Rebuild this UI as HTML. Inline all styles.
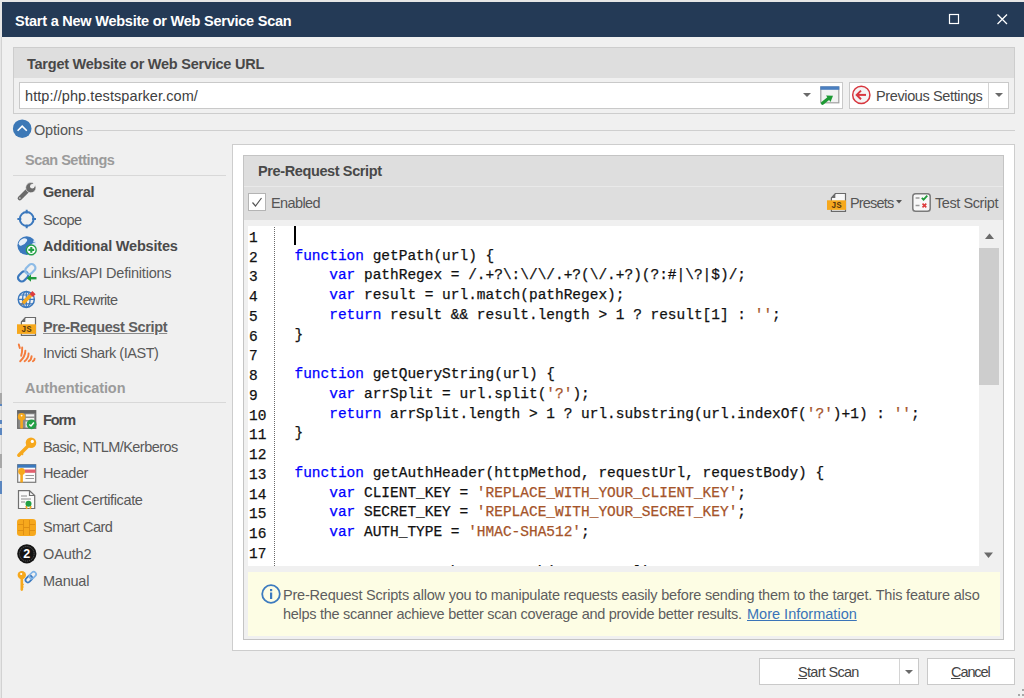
<!DOCTYPE html>
<html><head><meta charset="utf-8"><style>
html,body{margin:0;padding:0;}
body{width:1024px;height:698px;overflow:hidden;position:relative;background:#f0f0f0;font-family:"Liberation Sans",sans-serif;}
.a{position:absolute;}
.t{white-space:nowrap;line-height:normal;}
svg{overflow:visible;}
</style></head><body>
<div class="a" style="left:0px;top:0px;width:1024px;height:2px;background:#e6e6e6;"></div>
<div class="a" style="left:0px;top:0px;width:2px;height:698px;background:#e6e6e6;"></div>
<div class="a" style="left:1px;top:37px;width:1px;height:661px;background:#d2d2d2;"></div>
<div class="a" style="left:0px;top:393px;width:1.5px;height:12px;background:#a8a8a8;"></div>
<div class="a" style="left:0px;top:404px;width:1.5px;height:2px;background:#5a86c0;"></div>
<div class="a" style="left:0px;top:420px;width:1.5px;height:4px;background:#5a86c0;"></div>
<div class="a" style="left:0px;top:428px;width:1.5px;height:7px;background:#5a86c0;"></div>
<div class="a" style="left:0px;top:454px;width:1.5px;height:14px;background:#a8a8a8;"></div>
<div class="a" style="left:0px;top:481px;width:1.5px;height:13px;background:#5a86c0;"></div>
<div class="a" style="left:2px;top:2px;width:1022px;height:35px;background:#243a56;"></div>
<div class="a t  fit" style="left:15px;top:13px;font-size:14.5px;font-weight:bold;color:#ffffff;letter-spacing:-0.233px;font-family:'Liberation Sans', sans-serif;">Start a New Website or Web Service Scan</div>
<svg class="a" style="left:949px;top:14px;" width="11" height="11" viewBox="0 0 11 11"><rect x="0.5" y="0.5" width="9" height="9" fill="none" stroke="#fff" stroke-width="1.2"/></svg>
<svg class="a" style="left:997px;top:14px;" width="11" height="11" viewBox="0 0 11 11"><path d="M0.5 0.5 L10 10 M10 0.5 L0.5 10" stroke="#fff" stroke-width="1.3"/></svg>
<div class="a" style="left:13px;top:47px;width:1002px;height:67px;background:#f0f0f0;border:1px solid #cdcdcd;box-sizing:border-box;"></div>
<div class="a" style="left:14px;top:48px;width:1000px;height:30px;background:#dedede;"></div>
<div class="a t  fit" style="left:27px;top:56px;font-size:14.5px;font-weight:bold;color:#484848;letter-spacing:-0.239px;font-family:'Liberation Sans', sans-serif;">Target Website or Web Service URL</div>
<div class="a" style="left:19px;top:82px;width:824px;height:27px;background:#ffffff;border:1px solid #c9c9c9;box-sizing:border-box;"></div>
<div class="a t  fit" style="left:25px;top:88px;font-size:14.5px;font-weight:normal;color:#404040;letter-spacing:0.077px;font-family:'Liberation Sans', sans-serif;">http://php.testsparker.com/</div>
<svg class="a" style="left:803px;top:93px;" width="9" height="5" viewBox="0 0 9 5"><path d="M0 0 L8 0 L4 4 Z" fill="#6a6a6a"/></svg>
<svg class="a" style="left:820px;top:86px;" width="20" height="20" viewBox="0 0 20 20"><rect x="0.8" y="1" width="18" height="15.8" fill="#f2f2f2" stroke="#a0a0a0" stroke-width="1.2"/><rect x="0.3" y="0.3" width="19" height="3.5" fill="#4a7fc0"/><path d="M2.5 17.3 L9 12" stroke="#1e9a34" stroke-width="3.2" stroke-linecap="round"/><path d="M6 9.5 L13 9.8 L10.5 16 Z" fill="#1e9a34"/></svg>
<div class="a" style="left:849px;top:82px;width:160px;height:27px;background:#ffffff;border:1px solid #c9c9c9;box-sizing:border-box;"></div>
<div class="a" style="left:988px;top:83px;width:1px;height:25px;background:#d4d4d4;"></div>
<svg class="a" style="left:851px;top:85px;" width="21" height="21" viewBox="0 0 21 21"><circle cx="10.3" cy="9.9" r="8.6" fill="#f4f4f4" stroke="#d8373f" stroke-width="1.5"/><path d="M6 9.9 H15" stroke="#d8373f" stroke-width="2"/><path d="M10 5.6 L5.7 9.9 L10 14.2" fill="none" stroke="#d8373f" stroke-width="2"/></svg>
<div class="a t  fit" style="left:876px;top:88px;font-size:14.5px;font-weight:normal;color:#484848;letter-spacing:-0.376px;font-family:'Liberation Sans', sans-serif;">Previous Settings</div>
<svg class="a" style="left:995px;top:93px;" width="9" height="5" viewBox="0 0 9 5"><path d="M0 0 L8 0 L4 4 Z" fill="#6a6a6a"/></svg>
<div class="a" style="left:86px;top:130px;width:929px;height:1px;background:#cfcfcf;"></div>
<svg class="a" style="left:13px;top:120px;" width="19" height="19" viewBox="0 0 19 19"><circle cx="9.2" cy="8.7" r="9.3" fill="#3c78b6"/><path d="M4.6 10.7 L9.2 6.2 L13.8 10.7" fill="none" stroke="#fff" stroke-width="1.6"/></svg>
<div class="a t  fit" style="left:34px;top:122px;font-size:14.5px;font-weight:normal;color:#555555;letter-spacing:-0.167px;font-family:'Liberation Sans', sans-serif;">Options</div>
<div class="a t  fit" style="left:25px;top:152px;font-size:14.5px;font-weight:bold;color:#9b9b9b;letter-spacing:-0.5px;font-family:'Liberation Sans', sans-serif;">Scan Settings</div>
<div class="a" style="left:13px;top:175px;width:213px;height:1px;background:#d8d8d8;"></div>
<div class="a t  fit" style="left:43px;top:184px;font-size:14.5px;font-weight:bold;color:#4a4a4a;letter-spacing:-0.431px;font-family:'Liberation Sans', sans-serif;">General</div>
<div class="a t  fit" style="left:43px;top:212px;font-size:14.5px;font-weight:normal;color:#595959;letter-spacing:-0.5px;font-family:'Liberation Sans', sans-serif;">Scope</div>
<div class="a t  fit" style="left:43px;top:238px;font-size:14.5px;font-weight:bold;color:#4a4a4a;letter-spacing:-0.189px;font-family:'Liberation Sans', sans-serif;">Additional Websites</div>
<div class="a t  fit" style="left:43px;top:265px;font-size:14.5px;font-weight:normal;color:#595959;letter-spacing:-0.22px;font-family:'Liberation Sans', sans-serif;">Links/API Definitions</div>
<div class="a t  fit" style="left:43px;top:292px;font-size:14.5px;font-weight:normal;color:#595959;letter-spacing:-0.66px;font-family:'Liberation Sans', sans-serif;">URL Rewrite</div>
<div class="a t  fit" style="left:43px;top:319px;font-size:14.5px;font-weight:bold;color:#5e5e5e;letter-spacing:-0.353px;font-family:'Liberation Sans', sans-serif;text-decoration:underline;text-decoration-color:#8a8a8a;">Pre-Request Script</div>
<div class="a t  fit" style="left:43px;top:345px;font-size:14.5px;font-weight:normal;color:#595959;letter-spacing:-0.474px;font-family:'Liberation Sans', sans-serif;">Invicti Shark (IAST)</div>
<div class="a t  fit" style="left:25px;top:380px;font-size:14.5px;font-weight:bold;color:#9b9b9b;letter-spacing:-0.077px;font-family:'Liberation Sans', sans-serif;">Authentication</div>
<div class="a" style="left:13px;top:402px;width:213px;height:1px;background:#d8d8d8;"></div>
<div class="a t  fit" style="left:43px;top:412px;font-size:14.5px;font-weight:bold;color:#4a4a4a;letter-spacing:-1.07px;font-family:'Liberation Sans', sans-serif;">Form</div>
<div class="a t  fit" style="left:43px;top:439px;font-size:14.5px;font-weight:normal;color:#595959;letter-spacing:-0.563px;font-family:'Liberation Sans', sans-serif;">Basic, NTLM/Kerberos</div>
<div class="a t  fit" style="left:43px;top:465px;font-size:14.5px;font-weight:normal;color:#595959;letter-spacing:-0.44px;font-family:'Liberation Sans', sans-serif;">Header</div>
<div class="a t  fit" style="left:43px;top:492px;font-size:14.5px;font-weight:normal;color:#595959;letter-spacing:-0.383px;font-family:'Liberation Sans', sans-serif;">Client Certificate</div>
<div class="a t  fit" style="left:43px;top:519px;font-size:14.5px;font-weight:normal;color:#595959;letter-spacing:-0.47px;font-family:'Liberation Sans', sans-serif;">Smart Card</div>
<div class="a t  fit" style="left:43px;top:546px;font-size:14.5px;font-weight:normal;color:#595959;letter-spacing:-0.12px;font-family:'Liberation Sans', sans-serif;">OAuth2</div>
<div class="a t  fit" style="left:43px;top:573px;font-size:14.5px;font-weight:normal;color:#595959;letter-spacing:-0.24px;font-family:'Liberation Sans', sans-serif;">Manual</div>
<div class="a" style="left:232px;top:144px;width:783px;height:507px;background:#ffffff;border:1px solid #cdcdcd;box-sizing:border-box;"></div>
<div class="a" style="left:243px;top:155px;width:761px;height:485px;background:#f0f0f0;border:1px solid #c4c4c4;box-sizing:border-box;"></div>
<div class="a" style="left:244px;top:156px;width:759px;height:64px;background:#dedede;"></div>
<div class="a t  fit" style="left:258px;top:163px;font-size:14.5px;font-weight:bold;color:#484848;letter-spacing:-0.382px;font-family:'Liberation Sans', sans-serif;">Pre-Request Script</div>
<div class="a" style="left:244px;top:186px;width:759px;height:1px;background:#e9e9e9;"></div>
<div class="a" style="left:248px;top:193px;width:18px;height:18px;background:#ffffff;border:1px solid #b4b4b4;box-sizing:border-box;"></div>
<svg class="a" style="left:251px;top:196px;" width="12" height="12" viewBox="0 0 12 12"><path d="M1.5 6.5 L4.5 10 L10.5 2" fill="none" stroke="#555" stroke-width="1.2"/></svg>
<div class="a t  fit" style="left:271px;top:195px;font-size:14.5px;font-weight:normal;color:#555555;letter-spacing:-0.604px;font-family:'Liberation Sans', sans-serif;">Enabled</div>
<div class="a t  fit" style="left:850px;top:195px;font-size:14.5px;font-weight:normal;color:#555555;letter-spacing:-0.833px;font-family:'Liberation Sans', sans-serif;">Presets</div>
<svg class="a" style="left:896px;top:200px;" width="7" height="5" viewBox="0 0 7 5"><path d="M0 0 L6 0 L3 3.5 Z" fill="#555"/></svg>
<div class="a t  fit" style="left:935px;top:195px;font-size:14.5px;font-weight:normal;color:#555555;letter-spacing:-0.42px;font-family:'Liberation Sans', sans-serif;">Test Script</div>
<div class="a" style="left:248px;top:226px;width:731px;height:340px;background:#ffffff;"></div>
<div class="a" style="left:979px;top:226px;width:24px;height:340px;background:#f0f0f0;"></div>
<div class="a" style="left:979px;top:248px;width:20px;height:137px;background:#cdcdcd;"></div>
<svg class="a" style="left:985px;top:233px;" width="10" height="7" viewBox="0 0 10 7"><path d="M0 6 L9 6 L4.5 0.5 Z" fill="#6a6a6a"/></svg>
<svg class="a" style="left:984px;top:552px;" width="10" height="7" viewBox="0 0 10 7"><path d="M0 0.5 L9 0.5 L4.5 6 Z" fill="#6a6a6a"/></svg>
<div class="a" style="left:274px;top:227px;width:0;height:339px;border-left:1px dotted #6a6a6a"></div>
<div class="a" style="left:294px;top:226px;width:1.5px;height:19px;background:#000;"></div>
<div class="a" style="left:248px;top:572px;width:752px;height:64px;background:#fdfde4;"></div>
<svg class="a" style="left:261px;top:584px;" width="20" height="20" viewBox="0 0 20 20"><circle cx="10" cy="10" r="8.8" fill="none" stroke="#3d7bbf" stroke-width="1.8"/><rect x="9" y="8.5" width="2.2" height="6.5" fill="#3d7bbf"/><rect x="9" y="5" width="2.2" height="2.2" fill="#3d7bbf"/></svg>
<div class="a t  fit" style="left:283px;top:587px;font-size:14.5px;font-weight:normal;color:#5e5e5e;letter-spacing:-0.198px;font-family:'Liberation Sans', sans-serif;">Pre-Request Scripts allow you to manipulate requests easily before sending them to the target. This feature also</div>
<div class="a t  fit" style="left:283px;top:606px;font-size:14.5px;font-weight:normal;color:#5e5e5e;letter-spacing:-0.283px;font-family:'Liberation Sans', sans-serif;">helps the scanner achieve better scan coverage and provide better results.</div>
<div class="a t  fit" style="left:747px;top:606px;font-size:14.5px;font-weight:normal;color:#3a74b8;letter-spacing:0.011px;font-family:'Liberation Sans', sans-serif;text-decoration:underline;">More Information</div>
<div class="a" style="left:1022px;top:689px;width:2px;height:2px;background:#a8a8a8;"></div>
<div class="a" style="left:1018px;top:694px;width:2px;height:2px;background:#a8a8a8;"></div>
<div class="a" style="left:1022px;top:694px;width:2px;height:2px;background:#a8a8a8;"></div>
<div class="a" style="left:759px;top:658px;width:160px;height:27px;background:#ffffff;border:1px solid #c9c9c9;box-sizing:border-box;"></div>
<div class="a" style="left:899px;top:659px;width:1px;height:25px;background:#d4d4d4;"></div>
<div class="a t  fit" style="left:798px;top:664px;font-size:14.5px;font-weight:normal;color:#444444;letter-spacing:-0.705px;font-family:'Liberation Sans', sans-serif;"><u>S</u>tart Scan</div>
<svg class="a" style="left:905px;top:670px;" width="9" height="5" viewBox="0 0 9 5"><path d="M0 0 L8 0 L4 4 Z" fill="#6a6a6a"/></svg>
<div class="a" style="left:927px;top:658px;width:88px;height:27px;background:#ffffff;border:1px solid #c9c9c9;box-sizing:border-box;"></div>
<div class="a t  fit" style="left:951px;top:664px;font-size:14.5px;font-weight:normal;color:#444444;letter-spacing:-1.08px;font-family:'Liberation Sans', sans-serif;"><u>C</u>ancel</div>
<svg class="a" style="left:17px;top:182px;" width="20" height="20" viewBox="0 0 20 20"><path d="M2.8 16.2 L10.3 8.7" stroke="#6b6b6b" stroke-width="4.3" stroke-linecap="round"/><circle cx="2.9" cy="16.1" r="0.8" fill="#dcdcdc"/><circle cx="13.8" cy="5.7" r="5.1" fill="#6b6b6b" stroke="#f0f0f0" stroke-width="0.6"/><circle cx="15.3" cy="4.3" r="2.3" fill="#f0f0f0"/><g transform="rotate(-40 15.3 4.3)"><rect x="15.3" y="2.9" width="8" height="2.8" fill="#f0f0f0"/></g></svg>
<svg class="a" style="left:17px;top:210px;" width="20" height="20" viewBox="0 0 20 20"><circle cx="9.7" cy="9" r="6.9" fill="none" stroke="#3b78bd" stroke-width="2"/><path d="M9.7 -0.3 V3.6 M9.7 14.4 V18.3 M0.4 9 H4.3 M15.1 9 H19" stroke="#3b78bd" stroke-width="2"/></svg>
<svg class="a" style="left:17px;top:236px;" width="20" height="20" viewBox="0 0 20 20"><circle cx="9.7" cy="9.6" r="9.3" fill="#3b78bd"/><path d="M1.5 7.5 Q3 3 7 2.2 Q11 2.5 10 5 Q8.5 8 4.5 9.5 Q2.5 10.5 1.5 7.5 Z" fill="#e6eef8"/><path d="M13 9.5 Q15.5 6.5 18.8 6 Q19.6 9 19 12 Q16 11.5 13 9.5 Z" fill="#dbe8f5"/><path d="M17 3.5 Q18.5 5 19 6 L16 6.3 Z" fill="#dbe8f5"/><ellipse cx="10.6" cy="13.6" rx="1.6" ry="2.4" fill="#f2f2f2"/><circle cx="14.3" cy="13.9" r="4.9" fill="#fff" stroke="#22a045" stroke-width="1.4"/><path d="M14.3 11 V16.8 M11.4 13.9 H17.2" stroke="#22a045" stroke-width="2.1"/></svg>
<svg class="a" style="left:17px;top:263px;" width="20" height="20" viewBox="0 0 20 20"><g transform="rotate(-45 10 9.5)"><rect x="-1" y="5.8" width="11" height="7.4" rx="3.4" fill="none" stroke="#3b78bd" stroke-width="2.2"/><rect x="9.2" y="5.8" width="11" height="7.4" rx="3.4" fill="none" stroke="#8dbbe6" stroke-width="2.2"/></g><path d="M13 15.2 H19.5" stroke="#1f9a3a" stroke-width="2.4"/><path d="M9.8 15.2 L14 11.6 L14 18.8 Z" fill="#1f9a3a"/></svg>
<svg class="a" style="left:17px;top:290px;" width="20" height="20" viewBox="0 0 20 20"><circle cx="9.3" cy="9.4" r="8" fill="none" stroke="#3b78bd" stroke-width="1.5"/><ellipse cx="9.3" cy="9.4" rx="3.8" ry="8" fill="none" stroke="#3b78bd" stroke-width="1.3"/><path d="M1.3 9.4 H17.3 M2.5 5 H16 M2.5 13.8 H16 M9.3 1.4 V17.4" stroke="#3b78bd" stroke-width="1.2"/><path d="M5.8 13.2 L13.8 5.2" stroke="#f6a81d" stroke-width="3.6"/><path d="M12.6 3.9 L15.4 1.1 L18.6 4.3 L15.8 7.1 Z" fill="#dd3b3b"/><path d="M4 15 L6 13" stroke="#7a7a7a" stroke-width="1.6"/></svg>
<svg class="a" style="left:17px;top:317px;" width="20" height="20" viewBox="0 0 20 20"><path d="M4.4 5 L8.3 0.5 H18.5 V18.3 H4.4 Z" fill="#f8f8f8" stroke="#6a6a6a" stroke-width="1.2"/><path d="M4.4 5 L8.3 0.5 V5 Z" fill="#6a6a6a"/><rect x="0" y="7.3" width="19" height="9.6" fill="#f6a81d"/><text x="9.4" y="14.8" font-family="Liberation Mono, monospace" font-size="8.5" font-weight="bold" fill="#5a3a10" text-anchor="middle">JS</text></svg>
<svg class="a" style="left:17px;top:343px;" width="20" height="20" viewBox="0 0 20 20"><g stroke="#f47c3c" fill="none" stroke-linecap="round" stroke-width="1.9"><path d="M1.8 1.4 L2.8 5"/><path d="M5.2 4.5 Q5.3 9 4.2 12.8"/><path d="M8.4 7.6 Q8.2 13.5 3.2 18.3"/><path d="M11.6 10.5 Q11.4 15.5 7.6 18.3"/><path d="M14.6 13.1 Q14.5 16.5 11.7 18.3"/><path d="M17.6 15.7 Q17.5 17.3 15.9 18.3"/></g></svg>
<svg class="a" style="left:17px;top:410px;" width="20" height="20" viewBox="0 0 20 20"><rect x="0.7" y="0.7" width="18" height="17.6" fill="#8a8a8a" stroke="#6f6f6f" stroke-width="1.3"/><rect x="0.5" y="0.5" width="18.5" height="2.8" fill="#666"/><rect x="8.8" y="4.3" width="8.4" height="2.2" fill="#f4f4f4"/><rect x="8.8" y="7.9" width="8.4" height="2.2" fill="#f4f4f4"/><rect x="8.5" y="11.5" width="2.5" height="6" fill="#e8e8e8"/><circle cx="4.6" cy="6.8" r="3.8" fill="#f6a81d"/><circle cx="4.6" cy="5.6" r="0.9" fill="#fff"/><path d="M4.6 9 V18.5" stroke="#f6a81d" stroke-width="2.6"/><circle cx="14.6" cy="14.3" r="4.9" fill="#22a045"/><path d="M12.3 14.5 L14 16 L16.9 12.5" fill="none" stroke="#fff" stroke-width="1.5"/></svg>
<svg class="a" style="left:17px;top:437px;" width="20" height="20" viewBox="0 0 20 20"><circle cx="14" cy="5.8" r="5.3" fill="#f6a81d"/><circle cx="15.3" cy="4.4" r="1.6" fill="#fff"/><path d="M10.8 9.2 L1.8 18.2" stroke="#f6a81d" stroke-width="3.4" stroke-linecap="round"/><path d="M4 15.7 L6 17.7" stroke="#f6a81d" stroke-width="2"/></svg>
<svg class="a" style="left:17px;top:464px;" width="20" height="20" viewBox="0 0 20 20"><rect x="0.7" y="0.7" width="18" height="17.6" fill="#fbfbfb" stroke="#7a7a7a" stroke-width="1.2"/><rect x="0.5" y="0.5" width="18.5" height="3.2" fill="#3b78bd"/><rect x="7.5" y="5.5" width="11" height="3.3" fill="#e3606e"/><path d="M8.5 11.5 H17 M8.5 14.5 H17" stroke="#9a9a9a" stroke-width="1.2"/><circle cx="4.6" cy="7.5" r="3.4" fill="#f6a81d"/><path d="M4.6 10 V18.5" stroke="#f6a81d" stroke-width="2.6"/></svg>
<svg class="a" style="left:17px;top:490px;" width="20" height="20" viewBox="0 0 20 20"><path d="M1.5 0.7 H12.5 L17.7 5.5 V18.5 H1.5 Z" fill="#fafafa" stroke="#707070" stroke-width="1.2"/><path d="M12.5 0.7 V5.5 H17.7" fill="none" stroke="#707070" stroke-width="1.2"/><path d="M4 6 H10 M4 9 H14 M4 12 H8" stroke="#8a8a8a" stroke-width="1.2"/><path d="M9 16 L10 19 M14 16 L13 19" stroke="#f6a81d" stroke-width="1.6"/><circle cx="11.5" cy="13.8" r="3" fill="#22a045"/></svg>
<svg class="a" style="left:17px;top:519px;" width="20" height="20" viewBox="0 0 20 20"><rect x="0" y="0" width="19" height="17" rx="3.2" fill="#f6a81d"/><g stroke="#dd8c12" stroke-width="0.9" fill="none"><path d="M6.5 1 V16 M12.5 1 V16 M1 5.5 H6.5 M1 11.5 H6.5 M12.5 5.5 H18 M12.5 11.5 H18 M6.5 8.5 H12.5"/></g></svg>
<svg class="a" style="left:17px;top:544px;" width="20" height="20" viewBox="0 0 20 20"><circle cx="9.8" cy="9.8" r="9.6" fill="#141414"/><circle cx="9.8" cy="9.8" r="7.3" fill="none" stroke="#777" stroke-width="0.8" stroke-dasharray="1 1"/><text x="9.8" y="14.2" font-family="Liberation Sans, sans-serif" font-size="12.5" font-weight="bold" fill="#fff" text-anchor="middle">2</text></svg>
<svg class="a" style="left:17px;top:571px;" width="20" height="20" viewBox="0 0 20 20"><circle cx="4.8" cy="4.1" r="4.2" fill="#f6a81d"/><circle cx="4.2" cy="3" r="1.1" fill="#fff"/><path d="M4.8 7 V18.6" stroke="#f6a81d" stroke-width="2.6" stroke-linecap="round"/><path d="M4.8 13.5 H6.8 M4.8 16 H6.5" stroke="#f6a81d" stroke-width="1.6"/><g transform="rotate(-45 13.8 6.1)"><rect x="7.3" y="3.7" width="7.6" height="4.8" rx="2.4" fill="none" stroke="#3a78be" stroke-width="1.7"/><rect x="12.7" y="3.7" width="7.6" height="4.8" rx="2.4" fill="none" stroke="#7fb3e6" stroke-width="1.7"/></g></svg>
<svg class="a" style="left:827px;top:193px;" width="20" height="20" viewBox="0 0 20 20"><path d="M4.4 5 L8.3 0.5 H18.5 V18.3 H4.4 Z" fill="#f8f8f8" stroke="#6a6a6a" stroke-width="1.2"/><path d="M4.4 5 L8.3 0.5 V5 Z" fill="#6a6a6a"/><rect x="0" y="7.3" width="19" height="9.6" fill="#f6a81d"/><text x="9.4" y="14.8" font-family="Liberation Mono, monospace" font-size="8.5" font-weight="bold" fill="#5a3a10" text-anchor="middle">JS</text></svg>
<svg class="a" style="left:912px;top:193px;" width="20" height="20" viewBox="0 0 20 20"><rect x="0.8" y="0.8" width="17.4" height="17.4" rx="2.8" fill="#f8f8f8" stroke="#7a7a7a" stroke-width="1.5"/><path d="M3.6 5 H7.5 M3.6 12.5 H7.5" stroke="#9a9a9a" stroke-width="1.3"/><path d="M9.8 4.8 L11.6 6.7 L15.3 2.7" fill="none" stroke="#1f9a3a" stroke-width="1.8"/><path d="M10.5 10.6 L14.3 14.4 M14.3 10.6 L10.5 14.4" stroke="#dd3b3b" stroke-width="1.6"/></svg>
<div class="a t " style="left:249px;top:230px;font-size:14.47px;font-weight:normal;color:#111111;letter-spacing:0px;font-family:'Liberation Mono', monospace;-webkit-text-stroke:0.25px currentColor;">1</div>
<div class="a t " style="left:249px;top:250px;font-size:14.47px;font-weight:normal;color:#111111;letter-spacing:0px;font-family:'Liberation Mono', monospace;-webkit-text-stroke:0.25px currentColor;">2</div>
<div class="a t " style="left:294.5px;top:248px;font-size:14.47px;font-weight:normal;color:#111111;letter-spacing:0px;font-family:'Liberation Mono', monospace;white-space:pre;-webkit-text-stroke:0.25px currentColor;"><span style="color:#0000ff">function</span> getPath(url) {</div>
<div class="a t " style="left:249px;top:269px;font-size:14.47px;font-weight:normal;color:#111111;letter-spacing:0px;font-family:'Liberation Mono', monospace;-webkit-text-stroke:0.25px currentColor;">3</div>
<div class="a t " style="left:294.5px;top:267px;font-size:14.47px;font-weight:normal;color:#111111;letter-spacing:0px;font-family:'Liberation Mono', monospace;white-space:pre;-webkit-text-stroke:0.25px currentColor;">    <span style="color:#0000ff">var</span> pathRegex = /.+?\:\/\/.+?(\/.+?)(?:#|\?|$)/;</div>
<div class="a t " style="left:249px;top:289px;font-size:14.47px;font-weight:normal;color:#111111;letter-spacing:0px;font-family:'Liberation Mono', monospace;-webkit-text-stroke:0.25px currentColor;">4</div>
<div class="a t " style="left:294.5px;top:287px;font-size:14.47px;font-weight:normal;color:#111111;letter-spacing:0px;font-family:'Liberation Mono', monospace;white-space:pre;-webkit-text-stroke:0.25px currentColor;">    <span style="color:#0000ff">var</span> result = url.match(pathRegex);</div>
<div class="a t " style="left:249px;top:309px;font-size:14.47px;font-weight:normal;color:#111111;letter-spacing:0px;font-family:'Liberation Mono', monospace;-webkit-text-stroke:0.25px currentColor;">5</div>
<div class="a t " style="left:294.5px;top:307px;font-size:14.47px;font-weight:normal;color:#111111;letter-spacing:0px;font-family:'Liberation Mono', monospace;white-space:pre;-webkit-text-stroke:0.25px currentColor;">    <span style="color:#0000ff">return</span> result &amp;&amp; result.length &gt; 1 ? result[1] : <span style="color:#a5542a">''</span>;</div>
<div class="a t " style="left:249px;top:329px;font-size:14.47px;font-weight:normal;color:#111111;letter-spacing:0px;font-family:'Liberation Mono', monospace;-webkit-text-stroke:0.25px currentColor;">6</div>
<div class="a t " style="left:294.5px;top:327px;font-size:14.47px;font-weight:normal;color:#111111;letter-spacing:0px;font-family:'Liberation Mono', monospace;white-space:pre;-webkit-text-stroke:0.25px currentColor;">}</div>
<div class="a t " style="left:249px;top:348px;font-size:14.47px;font-weight:normal;color:#111111;letter-spacing:0px;font-family:'Liberation Mono', monospace;-webkit-text-stroke:0.25px currentColor;">7</div>
<div class="a t " style="left:249px;top:368px;font-size:14.47px;font-weight:normal;color:#111111;letter-spacing:0px;font-family:'Liberation Mono', monospace;-webkit-text-stroke:0.25px currentColor;">8</div>
<div class="a t " style="left:294.5px;top:366px;font-size:14.47px;font-weight:normal;color:#111111;letter-spacing:0px;font-family:'Liberation Mono', monospace;white-space:pre;-webkit-text-stroke:0.25px currentColor;"><span style="color:#0000ff">function</span> getQueryString(url) {</div>
<div class="a t " style="left:249px;top:388px;font-size:14.47px;font-weight:normal;color:#111111;letter-spacing:0px;font-family:'Liberation Mono', monospace;-webkit-text-stroke:0.25px currentColor;">9</div>
<div class="a t " style="left:294.5px;top:386px;font-size:14.47px;font-weight:normal;color:#111111;letter-spacing:0px;font-family:'Liberation Mono', monospace;white-space:pre;-webkit-text-stroke:0.25px currentColor;">    <span style="color:#0000ff">var</span> arrSplit = url.split(<span style="color:#a5542a">'?'</span>);</div>
<div class="a t " style="left:249px;top:408px;font-size:14.47px;font-weight:normal;color:#111111;letter-spacing:0px;font-family:'Liberation Mono', monospace;-webkit-text-stroke:0.25px currentColor;">10</div>
<div class="a t " style="left:294.5px;top:406px;font-size:14.47px;font-weight:normal;color:#111111;letter-spacing:0px;font-family:'Liberation Mono', monospace;white-space:pre;-webkit-text-stroke:0.25px currentColor;">    <span style="color:#0000ff">return</span> arrSplit.length &gt; 1 ? url.substring(url.indexOf(<span style="color:#a5542a">'?'</span>)+1) : <span style="color:#a5542a">''</span>;</div>
<div class="a t " style="left:249px;top:427px;font-size:14.47px;font-weight:normal;color:#111111;letter-spacing:0px;font-family:'Liberation Mono', monospace;-webkit-text-stroke:0.25px currentColor;">11</div>
<div class="a t " style="left:294.5px;top:425px;font-size:14.47px;font-weight:normal;color:#111111;letter-spacing:0px;font-family:'Liberation Mono', monospace;white-space:pre;-webkit-text-stroke:0.25px currentColor;">}</div>
<div class="a t " style="left:249px;top:447px;font-size:14.47px;font-weight:normal;color:#111111;letter-spacing:0px;font-family:'Liberation Mono', monospace;-webkit-text-stroke:0.25px currentColor;">12</div>
<div class="a t " style="left:249px;top:467px;font-size:14.47px;font-weight:normal;color:#111111;letter-spacing:0px;font-family:'Liberation Mono', monospace;-webkit-text-stroke:0.25px currentColor;">13</div>
<div class="a t " style="left:294.5px;top:465px;font-size:14.47px;font-weight:normal;color:#111111;letter-spacing:0px;font-family:'Liberation Mono', monospace;white-space:pre;-webkit-text-stroke:0.25px currentColor;"><span style="color:#0000ff">function</span> getAuthHeader(httpMethod, requestUrl, requestBody) {</div>
<div class="a t " style="left:249px;top:487px;font-size:14.47px;font-weight:normal;color:#111111;letter-spacing:0px;font-family:'Liberation Mono', monospace;-webkit-text-stroke:0.25px currentColor;">14</div>
<div class="a t " style="left:294.5px;top:485px;font-size:14.47px;font-weight:normal;color:#111111;letter-spacing:0px;font-family:'Liberation Mono', monospace;white-space:pre;-webkit-text-stroke:0.25px currentColor;">    <span style="color:#0000ff">var</span> CLIENT_KEY = <span style="color:#a5542a">'REPLACE_WITH_YOUR_CLIENT_KEY'</span>;</div>
<div class="a t " style="left:249px;top:506px;font-size:14.47px;font-weight:normal;color:#111111;letter-spacing:0px;font-family:'Liberation Mono', monospace;-webkit-text-stroke:0.25px currentColor;">15</div>
<div class="a t " style="left:294.5px;top:504px;font-size:14.47px;font-weight:normal;color:#111111;letter-spacing:0px;font-family:'Liberation Mono', monospace;white-space:pre;-webkit-text-stroke:0.25px currentColor;">    <span style="color:#0000ff">var</span> SECRET_KEY = <span style="color:#a5542a">'REPLACE_WITH_YOUR_SECRET_KEY'</span>;</div>
<div class="a t " style="left:249px;top:526px;font-size:14.47px;font-weight:normal;color:#111111;letter-spacing:0px;font-family:'Liberation Mono', monospace;-webkit-text-stroke:0.25px currentColor;">16</div>
<div class="a t " style="left:294.5px;top:524px;font-size:14.47px;font-weight:normal;color:#111111;letter-spacing:0px;font-family:'Liberation Mono', monospace;white-space:pre;-webkit-text-stroke:0.25px currentColor;">    <span style="color:#0000ff">var</span> AUTH_TYPE = <span style="color:#a5542a">'HMAC-SHA512'</span>;</div>
<div class="a t " style="left:249px;top:546px;font-size:14.47px;font-weight:normal;color:#111111;letter-spacing:0px;font-family:'Liberation Mono', monospace;-webkit-text-stroke:0.25px currentColor;">17</div>
<div class="a" style="left:247px;top:556px;width:732px;height:10px;overflow:hidden">
<div class="a t " style="left:47.5px;top:8px;font-size:14.47px;font-weight:normal;color:#111111;letter-spacing:0px;font-family:'Liberation Mono', monospace;white-space:pre;-webkit-text-stroke:0.25px currentColor;">    <span style="color:#0000ff">var</span> requestPath = getPath(requestUrl);</div>
</div>
</body></html>
